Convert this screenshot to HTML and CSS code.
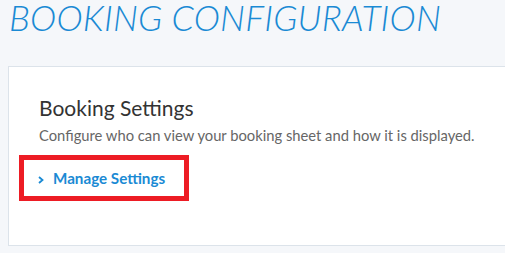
FILE: index.html
```html
<!DOCTYPE html>
<html lang="en">

<head>
    <meta charset="utf-8" />
    <meta name="viewport" content="width=device-width, initial-scale=1.0" />
    <title>Booking Configuration</title>
    <link rel="stylesheet" href="styles.css">
</head>

<body>
    <h1 class="page-title">BOOKING CONFIGURATION</h1>

    <div class="card">
        <h2 class="card-title">Booking Settings</h2>
        <p class="card-text">Configure who can view your booking sheet and how it is displayed.</p>
        <div class="highlight">
            <a class="manage-link" href="#">
                <svg class="chevron" width="6" height="8" viewBox="0 0 6 8">
                    <path d="M1 1 L4.5 4 L1 7" fill="none" stroke="currentColor" stroke-width="1.8" />
                </svg>
                Manage Settings
            </a>
        </div>
    </div>
</body>

</html>
```
FILE: styles.css
```css
html {
    font-family: Lato, "Open Sans", sans-serif;
    color: #333;
}

body {
    margin: 0;
    background: #f5f7fa;
    overflow: hidden;
}

.page-title {
    margin: 0;
    padding: 0 0 0 9px;
    font-size: 35.5px;
    font-weight: 300;
    font-style: italic;
    line-height: 36px;
    color: #1a8ad4;
    letter-spacing: 0.2px;
}

.card {
    margin: 30px 0 0 8px;
    width: 560px;
    padding: 28px 30px 44px 30px;
    background: #fff;
    border: 1px solid #dce3ea;
}

.card-title {
    margin: 0;
    font-size: 21px;
    font-weight: 400;
    line-height: 26px;
    color: #333;
}

.card-text {
    margin: 4px 0 0;
    font-size: 14.75px;
    line-height: 20px;
    color: #666;
}

.highlight {
    display: inline-block;
    margin: 10px 0 0 -20px;
    padding: 10px 19px 10px 14px;
    border: 5px solid #ed1c24;
}

.manage-link {
    display: flex;
    align-items: center;
    gap: 9px;
    font-size: 15.2px;
    font-weight: 700;
    line-height: 16px;
    color: #1a8ad4;
    text-decoration: none;
}

.chevron {
    margin-top: 3px;
}
```
